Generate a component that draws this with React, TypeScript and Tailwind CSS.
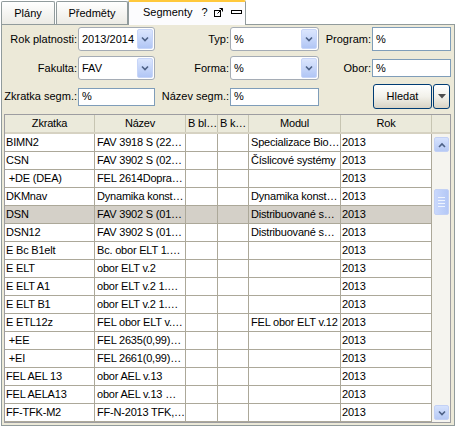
import React from 'react';

const rows: [string, string, string, boolean?][] = [
  ['BIMN2', 'FAV 3918 S (22…', 'Specializace Bio…'],
  ['CSN', 'FAV 3902 S (02…', 'Číslicové systémy'],
  [' +DE (DEA)', 'FEL 2614Dopra…', ''],
  ['DKMnav', 'Dynamika konst…', 'Dynamika konst…'],
  ['DSN', 'FAV 3902 S (01…', 'Distribuované s…', true],
  ['DSN12', 'FAV 3902 S (01…', 'Distribuované s…'],
  ['E Bc B1elt', 'Bc. obor ELT 1.…', ''],
  ['E ELT', 'obor ELT v.2', ''],
  ['E ELT A1', 'obor ELT v.2 1.…', ''],
  ['E ELT B1', 'obor ELT v.2 1.…', ''],
  ['E ETL12z', 'FEL obor ELT v.…', 'FEL obor ELT v.12'],
  [' +EE', 'FEL 2635(0,99)…', ''],
  [' +EI', 'FEL 2661(0,99)…', ''],
  ['FEL AEL 13', 'obor AEL v.13', ''],
  ['FEL AELA13', 'obor AEL v.13 …', ''],
  ['FF-TFK-M2', 'FF-N-2013 TFK,…', ''],
];

function Chevron({ up = false }: { up?: boolean }) {
  return (
    <svg width="8" height="6" viewBox="0 0 8 6">
      <path d={up ? 'M1 5 L4 2 L7 5' : 'M1 1.5 L4 4.5 L7 1.5'} stroke="#4D6185" strokeWidth="1.6" fill="none" />
    </svg>
  );
}

function Select({ value, width }: { value: string; width: string }) {
  return (
    <div className={`flex h-[24px] ${width} items-center rounded-[3px] border border-[#A5ACB5] bg-white`}>
      <span className="flex-1 pl-[3px]">{value}</span>
      <span className="mr-[1px] flex h-[20px] w-[16px] items-center justify-center rounded-[2px] border border-[#C7D5F8] bg-gradient-to-b from-[#DCE6FD] to-[#B1C6F5]">
        <Chevron />
      </span>
    </div>
  );
}

function TextInput({ value, width, height }: { value: string; width: string; height: string }) {
  return (
    <div className={`flex ${height} ${width} items-center border border-[#7F9DB9] bg-white pl-[3px]`}>{value}</div>
  );
}

function Label({ text, width }: { text: string; width: string }) {
  return <span className={`${width} whitespace-nowrap pr-[1px] text-right`}>{text}</span>;
}

export default function App() {
  return (
    <div className="h-[428px] w-[456px] bg-white font-['Liberation_Sans',Arial,sans-serif] text-[11px] leading-none text-black">
      {/* Tabs */}
      <div className="flex h-[24px] items-end pl-[1px]">
        <div className="flex h-[23px] w-[54px] items-center justify-center rounded-t-[2px] border border-b-0 border-[#919B9C] bg-gradient-to-b from-white to-[#ECEBE5]">
          Plány
        </div>
        <div className="ml-[1px] flex h-[23px] w-[72px] items-center justify-center rounded-t-[2px] border border-b-0 border-[#919B9C] bg-gradient-to-b from-white to-[#ECEBE5]">
          Předměty
        </div>
        <div className="relative z-10 -mb-[1px] flex h-[25px] w-[118px] items-center gap-[6px] rounded-t-[2px] border-x border-t-[2px] border-x-[#919B9C] border-t-[#FFC83C] bg-[#FCFCFE] pb-[2px] pl-[14px]">
          <span>Segmenty</span>
          <span className="ml-[3px]">?</span>
          <svg width="11" height="9" viewBox="0 0 11 9">
            <rect x="0.5" y="2.5" width="6" height="6" fill="none" stroke="#000" />
            <path d="M3.5 5.5 L8.5 0.5 M5.5 0.5 H8.5 V3.5" stroke="#000" fill="none" />
          </svg>
          <svg width="11" height="5" viewBox="0 0 11 5">
            <rect x="0.5" y="0.5" width="10" height="3" fill="none" stroke="#000" />
          </svg>
        </div>
      </div>

      {/* Panel */}
      <div className="ml-[1px] flex h-[402px] w-[454px] flex-col border border-[#919B9C] bg-[#ECE9D8] pl-[2px] pt-[2px]">
        <div className="flex h-[24px] items-center">
          <Label text="Rok platnosti:" width="w-[74px]" />
          <Select value="2013/2014" width="w-[77px]" />
          <Label text="Typ:" width="w-[75px]" />
          <Select value="%" width="w-[89px]" />
          <Label text="Program:" width="w-[53px]" />
          <TextInput value="%" width="w-[79px]" height="h-[24px]" />
        </div>
        <div className="mt-[5px] flex h-[24px] items-center">
          <Label text="Fakulta:" width="w-[74px]" />
          <Select value="FAV" width="w-[77px]" />
          <Label text="Forma:" width="w-[75px]" />
          <Select value="%" width="w-[89px]" />
          <Label text="Obor:" width="w-[53px]" />
          <TextInput value="%" width="w-[79px]" height="h-[18px]" />
        </div>
        <div className="mt-[4px] flex h-[25px] items-center">
          <Label text="Zkratka segm.:" width="w-[74px]" />
          <TextInput value="%" width="w-[77px]" height="h-[18px]" />
          <Label text="Název segm.:" width="w-[75px]" />
          <TextInput value="%" width="w-[89px]" height="h-[18px]" />
          <div className="ml-[54px] flex h-[25px] w-[59px] items-center justify-center rounded-[3px] border border-[#003C74] bg-gradient-to-b from-white via-[#F2F1EA] to-[#D8D3C5]">
            Hledat
          </div>
          <div className="ml-[1px] flex h-[25px] w-[17px] items-center justify-center rounded-[3px] border border-[#003C74] bg-gradient-to-b from-white via-[#F2F1EA] to-[#D8D3C5]">
            <svg width="8" height="5" viewBox="0 0 8 5">
              <path d="M0 0 H8 L4 4.5 Z" fill="#4D4D4D" />
            </svg>
          </div>
        </div>

        {/* Table */}
        <div className="mt-[5px] w-[447px] border border-[#9D9DA1] bg-white tracking-[-0.2px]">
          <div className="flex h-[19px] border-b-[2px] border-[#D6D2C2] bg-[#EBEADB]">
            <div className="flex w-[90px] items-center justify-center border-r border-[#C7C5B2]">Zkratka</div>
            <div className="flex w-[91px] items-center justify-center border-r border-[#C7C5B2]">Název</div>
            <div className="flex w-[32px] items-center overflow-hidden whitespace-nowrap border-r border-[#C7C5B2] pl-[2px]">B bl…</div>
            <div className="flex w-[31px] items-center overflow-hidden whitespace-nowrap border-r border-[#C7C5B2] pl-[2px]">B k…</div>
            <div className="flex w-[92px] items-center justify-center border-r border-[#C7C5B2]">Modul</div>
            <div className="flex w-[91px] items-center justify-center border-r border-[#C7C5B2]">Rok</div>
            <div className="flex-1" />
          </div>
          <div className="flex">
            <div className="w-[427px]">
              {rows.map(([code, name, modul, sel], i) => (
                <div key={i} className={`flex h-[18px] border-b border-[#ACA899] ${sel ? 'bg-[#D4D0C8]' : 'bg-white'}`}>
                  <div className="flex w-[90px] items-center overflow-hidden whitespace-pre border-r border-[#ACA899] pl-[1px]">{code}</div>
                  <div className="flex w-[91px] items-center overflow-hidden whitespace-nowrap border-r border-[#ACA899] pl-[2px]">{name}</div>
                  <div className="w-[32px] border-r border-[#ACA899]" />
                  <div className="w-[31px] border-r border-[#ACA899]" />
                  <div className="flex w-[92px] items-center overflow-hidden whitespace-nowrap border-r border-[#ACA899] pl-[2px]">{modul}</div>
                  <div className="flex w-[91px] items-center border-r border-[#ACA899] pl-[1px]">2013</div>
                </div>
              ))}
            </div>
            {/* Scrollbar */}
            <div className="flex w-[18px] flex-col bg-[#F5F4EF] pb-[2px] pl-[2px] pr-[1px] pt-[3px]">
              <div className="flex h-[15px] items-center justify-center rounded-[2px] border border-[#C3D1F5] bg-gradient-to-b from-[#D6E2FD] to-[#B6C9F4]">
                <Chevron up />
              </div>
              <div className="mt-[37px] flex h-[26px] flex-col items-center justify-center gap-[2px] rounded-[2px] border border-[#C3D1F5] bg-gradient-to-r from-[#C9D8FC] to-[#B4C8F6]">
                <div className="h-[1px] w-[7px] bg-[#EEF4FE]" />
                <div className="h-[1px] w-[7px] bg-[#EEF4FE]" />
                <div className="h-[1px] w-[7px] bg-[#EEF4FE]" />
                <div className="h-[1px] w-[7px] bg-[#EEF4FE]" />
              </div>
              <div className="mt-auto flex h-[15px] items-center justify-center rounded-[2px] border border-[#C3D1F5] bg-gradient-to-b from-[#D6E2FD] to-[#B6C9F4]">
                <Chevron />
              </div>
            </div>
          </div>
        </div>
      </div>
    </div>
  );
}
